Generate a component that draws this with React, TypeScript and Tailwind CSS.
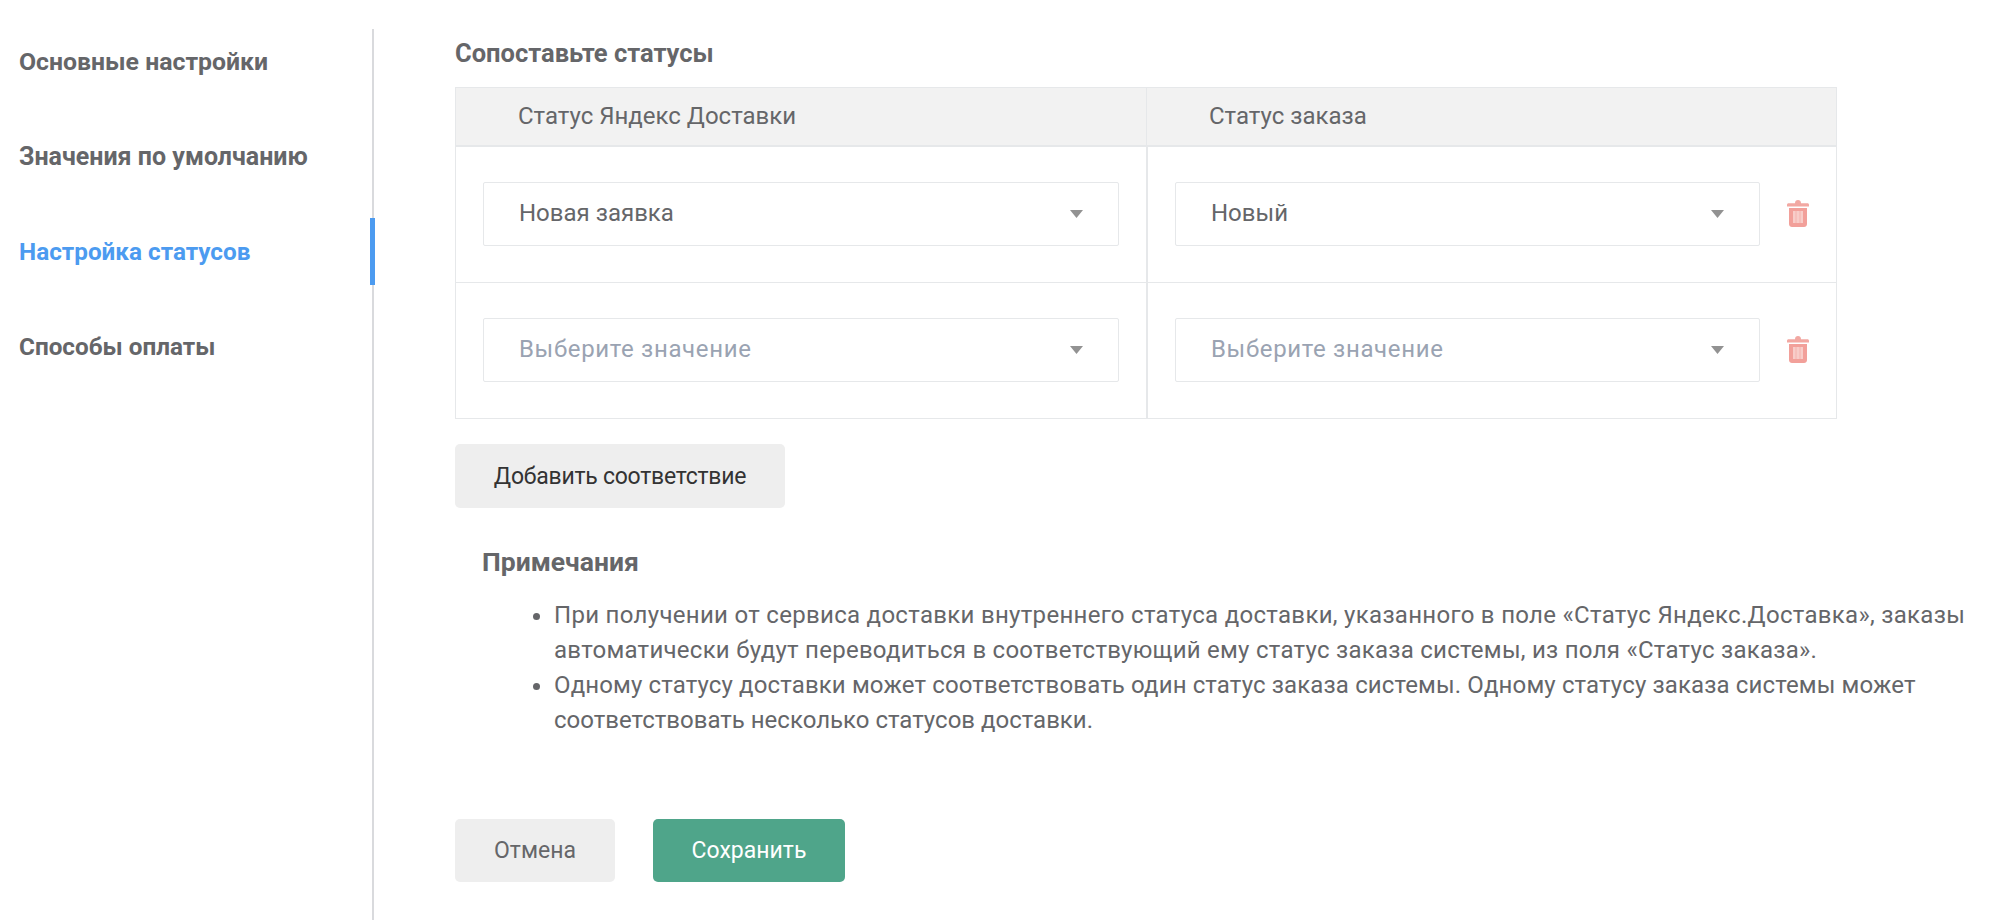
import React from 'react'

const menuItems = [
    { id: 1, title: 'Основные настройки', size: 'text-[24.8px]' },
    { id: 2, title: 'Значения по умолчанию', size: 'text-[25px]' },
    { id: 3, title: 'Настройка статусов', size: 'text-[24.3px]', active: true },
    { id: 4, title: 'Способы оплаты', size: 'text-[24.3px]' },
]

const Caret = () => (
    <svg width="13" height="8" viewBox="0 0 13 8" className="shrink-0">
        <path d="M0 0H13L6.5 8Z" fill="#929292" />
    </svg>
)

const TrashIcon = () => (
    <svg width="22" height="27" viewBox="0 0 22 27" className="shrink-0">
        <path d="M8 3.2C8 1.2 9.2 0 11 0s3 1.2 3 3.2h6.5c.8 0 1.5.7 1.5 1.5V6.5H0V4.7c0-.8.7-1.5 1.5-1.5Z" fill="#f2a8a2" />
        <path d="M2 8h18v16c0 1.7-1.3 3-3 3H5c-1.7 0-3-1.3-3-3Z" fill="#f2a09a" />
        <rect x="6" y="11" width="10" height="12" fill="#f8cdc9" />
        <path d="M9 11v12M13 11v12" stroke="#f4b3ae" strokeWidth="1" />
    </svg>
)

const Select = ({ value, width }: { value?: string; width: string }) => (
    <div className={`${width} h-[64px] flex items-center justify-between pl-[35px] pr-[26px] border border-[#e6e8ea] rounded-[2px] bg-white`}>
        <span className={value ? 'text-[#656669]' : 'text-[#9aa3b2] tracking-[0.65px]'}>{value ?? 'Выберите значение'}</span>
        <div className="mr-[9px]">
            <Caret />
        </div>
    </div>
)

const StatusRow = ({ left, right }: { left?: string; right?: string }) => (
    <div className="flex h-[136px] pb-[2px] border-b border-[#e6e8ea]">
        <div className="w-[690px] shrink-0 flex items-center pl-[27px]">
            <Select value={left} width="w-[636px]" />
        </div>
        <div className="flex-1 flex items-center pl-[27px] border-l-2 border-[#e6e8ea] -mb-[2px]">
            <div className="flex items-center -mt-[2px]">
                <Select value={right} width="w-[585px]" />
                <div className="ml-[27px]">
                    <TrashIcon />
                </div>
            </div>
        </div>
    </div>
)

const App = () => {
    return (
        <div className="flex h-[920px] w-full pt-[29px] bg-white overflow-hidden text-[24px] leading-[35px] text-[#656669] font-['Roboto',sans-serif]">
            <div className="w-[374px] shrink-0 border-r-2 border-[#d9dadd]">
                <div className="-mt-[1px]">
                    {menuItems.map((item) => (
                        <div
                            key={item.id}
                            className={`h-[67px] mb-[28px] pl-[19px] flex items-center -mr-[3px] font-bold ${item.size} ${item.active ? 'text-[#4c9bf0] border-r-[5px] border-[#4c9bf0]' : ''}`}
                        >
                            {item.title}
                        </div>
                    ))}
                </div>
            </div>

            <div className="flex-1 pl-[81px] pt-[7px]">
                <h2 className="font-bold text-[25.5px] mb-[16px]">Сопоставьте статусы</h2>

                <div className="w-[1382px] border-x border-t border-[#e6e8ea]">
                    <div className="flex h-[59px] bg-[#f2f2f2] border-b-2 border-[#e6e8ea]">
                        <div className="w-[690px] shrink-0 pl-[62px] flex items-center">Статус Яндекс Доставки</div>
                        <div className="flex-1 pl-[62px] flex items-center border-l border-[#e6e8ea]">Статус заказа</div>
                    </div>
                    <StatusRow left="Новая заявка" right="Новый" />
                    <StatusRow />
                </div>

                <button className="block mt-[25px] w-[330px] h-[64px] bg-[#eeeeee] rounded-[5px] text-[23px] tracking-[-0.25px] text-[#333333]">
                    Добавить соответствие
                </button>

                <div className="mt-[36px] pl-[27px]">
                    <h3 className="font-bold text-[26.5px]">Примечания</h3>
                    <ul className="mt-[19px] pl-[72px] list-disc whitespace-nowrap">
                        <li>
                            <span className="tracking-[0.3px]">При получении от сервиса доставки внутреннего статуса доставки, указанного в поле «Статус Яндекс.Доставка», заказы</span>
                            <br />
                            <span className="tracking-[0.26px]">автоматически будут переводиться в соответствующий ему статус заказа системы, из поля «Статус заказа».</span>
                        </li>
                        <li>
                            <span className="tracking-[0.13px]">Одному статусу доставки может соответствовать один статус заказа системы. Одному статусу заказа системы может</span>
                            <br />
                            соответствовать несколько статусов доставки.
                        </li>
                    </ul>
                </div>

                <div className="flex gap-[38px] mt-[81px]">
                    <button className="w-[160px] h-[63px] bg-[#eeeeee] rounded-[5px] text-[23px] text-[#656669]">Отмена</button>
                    <button className="w-[192px] h-[63px] bg-[#4fa58a] rounded-[5px] text-[23px] text-white">Сохранить</button>
                </div>
            </div>
        </div>
    )
}

export default App
